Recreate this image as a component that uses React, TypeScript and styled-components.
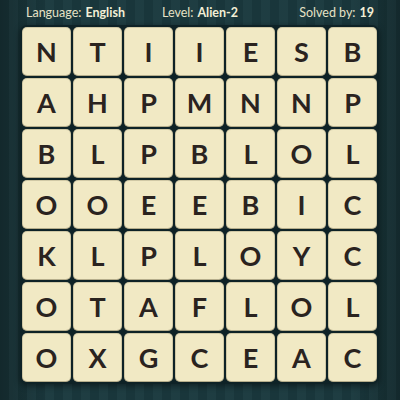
import React from 'react';
import styled, { createGlobalStyle } from 'styled-components';

const Global = createGlobalStyle`
  html, body {
    margin: 0;
    padding: 0;
    width: 400px;
    height: 400px;
    overflow: hidden;
  }
  body {
    font-family: "Lato", "Open Sans", sans-serif;
  }
`;

const Page = styled.div`
  width: 400px;
  height: 400px;
  box-sizing: border-box;
  padding: 2px 0 0 20px;
  background-color: #1b3a3f;
  background-image: repeating-linear-gradient(
    90deg,
    rgba(0, 0, 0, 0.07) 0px,
    rgba(0, 0, 0, 0.07) 9px,
    rgba(255, 255, 255, 0.015) 9px,
    rgba(255, 255, 255, 0.015) 18px
  ),
  linear-gradient(90deg, rgba(0,0,0,0.25), rgba(0,0,0,0) 12%, rgba(0,0,0,0) 88%, rgba(0,0,0,0.25));
  display: flex;
  flex-direction: column;
`;

const Header = styled.div`
  display: grid;
  grid-template-columns: 136px 1fr auto;
  align-items: center;
  height: 21px;
  padding: 0 26px 0 6px;
  color: #e6e2c6;
  font-size: 12.5px;
`;

const Stat = styled.span`
  white-space: nowrap;
`;

const Value = styled.b`
  font-weight: 700;
  margin-left: 4px;
  color: #f3efd6;
`;

const Board = styled.div`
  margin-top: 2px;
  width: 359px;
  display: grid;
  grid-template-columns: repeat(7, 49px);
  grid-auto-rows: 49px;
  gap: 2px;
  padding: 2px;
  box-sizing: border-box;
  background: #0e2226;
  border-radius: 7px;
  box-shadow: 0 2px 6px rgba(0, 0, 0, 0.45);
`;

const Tile = styled.div`
  background: #f1e9c4;
  border-radius: 5px;
  box-shadow: inset 0 0 0 1px rgba(60, 50, 30, 0.18), inset 0 -1px 0 rgba(80, 70, 40, 0.2);
  display: flex;
  align-items: center;
  justify-content: center;
  color: #2a231f;
  font-size: 27px;
  font-weight: 700;
  font-family: "Lato", sans-serif;
  line-height: 1;
`;

const rows = [
  'NTIIESB',
  'AHPMNNP',
  'BLPBLOL',
  'OOEEBIC',
  'KLPLOYC',
  'OTAFLOL',
  'OXGCEAC',
];

export default function App() {
  return (
    <Page>
      <Global />
      <Header>
        <Stat>
          Language:<Value>English</Value>
        </Stat>
        <Stat>
          Level:<Value>Alien-2</Value>
        </Stat>
        <Stat>
          Solved by:<Value>19</Value>
        </Stat>
      </Header>
      <Board>
        {rows.flatMap((row, r) =>
          row.split('').map((ch, c) => <Tile key={`${r}-${c}`}>{ch}</Tile>)
        )}
      </Board>
    </Page>
  );
}
